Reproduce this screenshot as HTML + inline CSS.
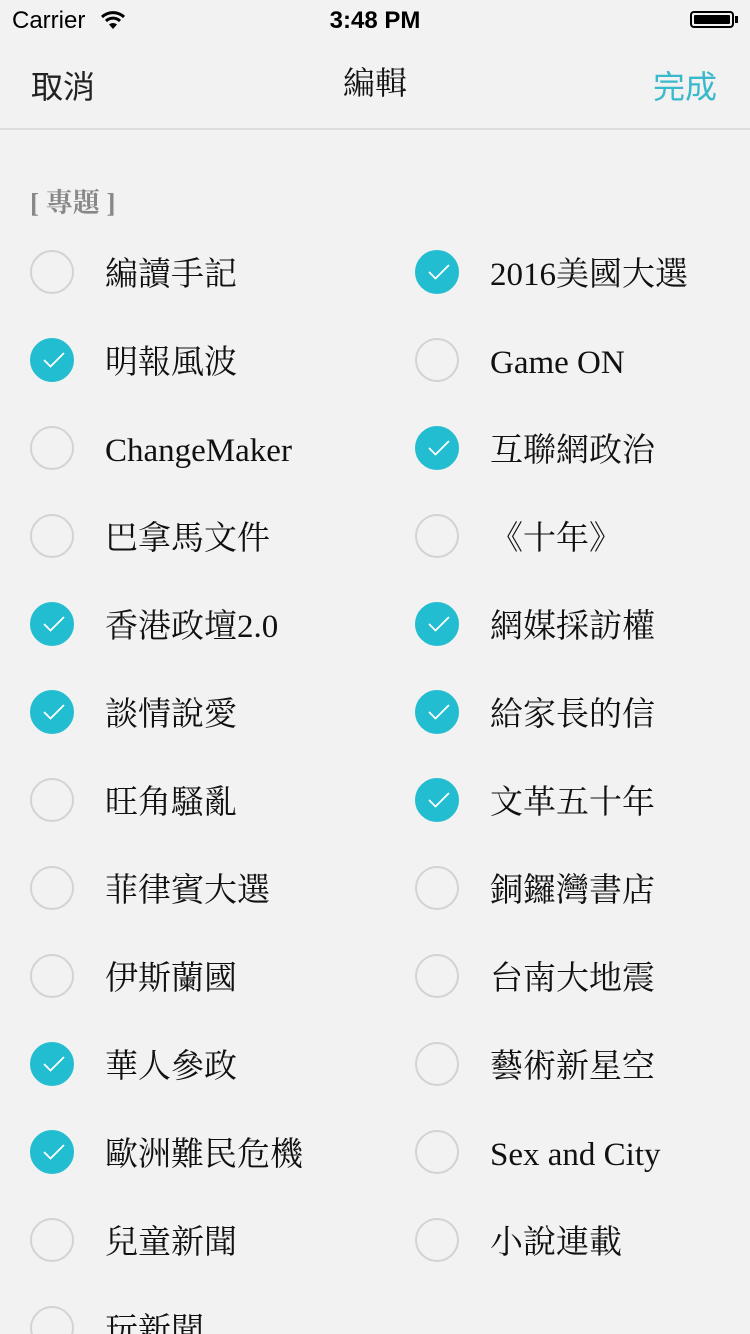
<!DOCTYPE html>
<html><head><meta charset="utf-8"><style>
html,body{margin:0;width:750px;height:1334px;overflow:hidden}
body{background:#f2f2f2;position:relative;font-family:"Liberation Serif","Noto Serif CJK SC",serif;}
.sb{position:absolute;top:0;left:0;width:750px;height:40px;font-family:"Liberation Sans",sans-serif;font-size:24px;color:#000}
.nav{position:absolute;top:40px;left:0;width:750px;height:88px;border-bottom:2px solid #dcdcdc}
.it{position:absolute;height:44px;}
.c{position:absolute;left:0;top:0;width:40px;height:40px;border:2px solid #d3d3d3;border-radius:50%}
.c.on{background:#22bdd1;border-color:#22bdd1}
.c.on svg{position:absolute;left:10px;top:11px}
.t{position:absolute;left:75px;top:-3px;font-size:33px;color:#111;white-space:nowrap;line-height:56px}
</style></head><body>
<div class="sb">
<span style="position:absolute;left:12px;top:7px">Carrier</span>
<svg style="position:absolute;left:100px;top:10px" width="26" height="20" viewBox="0 0 26 20"><path d="M2 7 A16 16 0 0 1 24 7" stroke="#000" stroke-width="3" fill="none"/><path d="M6 11 A10 10 0 0 1 20 11" stroke="#000" stroke-width="3" fill="none"/><path d="M13 19 L9 14.5 A6 6 0 0 1 17 14.5 Z" fill="#000"/></svg>
<span style="position:absolute;left:0;width:750px;text-align:center;top:7px;font-weight:bold">3:48 PM</span>
<div style="position:absolute;left:690px;top:11px;width:44px;height:17px;border:2px solid #000;border-radius:4px;box-sizing:border-box;padding:2px"><div style="background:#000;width:100%;height:100%;border-radius:1px"></div></div>
<div style="position:absolute;left:735px;top:16px;width:3px;height:7px;background:#000"></div>
</div>
<div class="nav">
<span style="position:absolute;left:31px;top:22px;font-size:32px;font-family:'Noto Sans CJK TC',sans-serif;color:#222">取消</span>
<span style="position:absolute;left:0;width:750px;text-align:center;top:18px;font-size:32px;color:#111">編輯</span>
<span style="position:absolute;left:653px;top:22px;font-size:32px;font-family:'Noto Sans CJK TC',sans-serif;color:#3bb9cc">完成</span>
</div>
<div style="position:absolute;left:30px;top:181px;font-size:27px;color:#888;font-weight:bold">[ 專題 ]</div>
<div id="l"></div>
<script>
var L=[["編讀手記",0],["明報風波",1],["ChangeMaker",0],["巴拿馬文件",0],["香港政壇2.0",1],["談情說愛",1],["旺角騷亂",0],["菲律賓大選",0],["伊斯蘭國",0],["華人參政",1],["歐洲難民危機",1],["兒童新聞",0],["玩新聞",0]];
var R=[["2016美國大選",1],["Game ON",0],["互聯網政治",1],["《十年》",0],["網媒採訪權",1],["給家長的信",1],["文革五十年",1],["銅鑼灣書店",0],["台南大地震",0],["藝術新星空",0],["Sex and City",0],["小說連載",0]];
var h="",ck='<svg width="24" height="18" viewBox="0 0 24 18"><path d="M2 9 L8.5 15.5 L22 2" stroke="#fff" stroke-width="1.8" fill="none"/></svg>';
function add(a,x){a.forEach(function(e,i){h+='<div class="it" style="left:'+x+'px;top:'+(250+88*i)+'px"><div class="c'+(e[1]?' on':'')+'">'+(e[1]?ck:'')+'</div><div class="t">'+e[0]+'</div></div>';});}
add(L,30);add(R,415);document.getElementById('l').innerHTML=h;
</script>
</body></html>
